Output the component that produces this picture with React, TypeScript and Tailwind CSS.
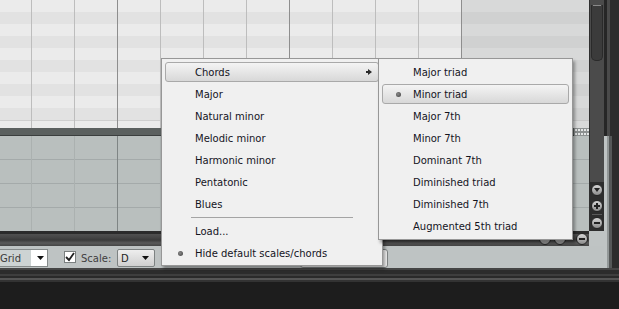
import React from "react";

const MENU_FONT = "font-['DejaVu_Sans',Verdana,sans-serif] text-[10px] text-[#14141e]";

const SCALES = ["Major", "Natural minor", "Melodic minor", "Harmonic minor", "Pentatonic", "Blues"];
const CHORDS = [
  "Major triad",
  "Minor triad",
  "Major 7th",
  "Minor 7th",
  "Dominant 7th",
  "Diminished triad",
  "Diminished 7th",
  "Augmented 5th triad",
];

// grid line x positions: 31, 74, 117 ... each 43px apart
const COLS = [0, 1, 2, 3, 4, 5, 6, 7, 8, 9];

function Bullet() {
  return <span className="block h-[5px] w-[5px] rounded-full bg-[radial-gradient(circle_at_40%_40%,#8a8a8a,#3c3c3c)]" />;
}

function SubArrow() {
  return (
    <svg width="6" height="6" viewBox="0 0 6 6" className="mr-[6px]">
      <path d="M0 2h2V0l4 3-4 3V4H0z" fill="#2a2a2a" />
    </svg>
  );
}

function MenuItem({
  label,
  active = false,
  bullet = false,
  arrow = false,
  indent,
}: {
  label: string;
  active?: boolean;
  bullet?: boolean;
  arrow?: boolean;
  indent: string;
}) {
  return (
    <div className="h-[22px] px-[3px] py-px">
      <div
        className={
          active
            ? "flex h-[20px] items-center rounded-[3px] border border-[#a9a9a9] bg-gradient-to-b from-[#f4f4f4] to-[#d8d8d8]"
            : "flex h-[20px] items-center rounded-[3px] border border-transparent"
        }
      >
        <span className={`flex shrink-0 items-center justify-center ${indent}`}>{bullet && <Bullet />}</span>
        <span className="flex-1 pt-px leading-none">{label}</span>
        {arrow && <SubArrow />}
      </div>
    </div>
  );
}

function RoundBtn({ glyph }: { glyph: "minus" | "plus" | "down" }) {
  return (
    <span className="flex h-[12px] w-[12px] items-center justify-center rounded-full border border-[#262626] bg-gradient-to-b from-[#d6d6d6] to-[#8c8c8c]">
      <svg width="8" height="8" viewBox="0 0 8 8">
        {glyph === "minus" && <rect x="1" y="3" width="6" height="2" fill="#222" />}
        {glyph === "plus" && <path d="M1 3h2V1h2v2h2v2H5v2H3V5H1z" fill="#222" />}
        {glyph === "down" && <path d="M1 2h6L4 6z" fill="#222" />}
      </svg>
    </span>
  );
}

function DropArrow() {
  return (
    <svg width="7" height="4" viewBox="0 0 7 4">
      <path d="M0 0h7L3.5 4z" fill="#111" />
    </svg>
  );
}

function TopGrid() {
  return (
    <div className="flex h-[128px] w-[589px] bg-[linear-gradient(to_bottom,transparent_120px,#cfcfcf_120px,#cfcfcf_121px,transparent_121px),repeating-linear-gradient(to_bottom,#ebebeb_0px,#ebebeb_12px,#e2e2e2_12px,#e2e2e2_24px)]">
      <div className="w-[31px] shrink-0" />
      {COLS.map((i) => (
        <div
          key={i}
          className={
            i === 2 || i === 6
              ? "w-[43px] shrink-0 border-l border-[#8e8e8e]"
              : "w-[43px] shrink-0 border-l border-[#bdbdbd]"
          }
        />
      ))}
      <div className="flex-1 border-l border-[#8e8e8e] bg-[linear-gradient(to_bottom,transparent_120px,#c6c6c6_120px,#c6c6c6_121px,transparent_121px),repeating-linear-gradient(to_bottom,#d8d9d9_0px,#d8d9d9_12px,#d0d1d1_12px,#d0d1d1_24px)]" />
    </div>
  );
}

function LowerGrid() {
  return (
    <div className="flex h-[95px] w-[589px] bg-[#b9bfbe] bg-[repeating-linear-gradient(to_bottom,transparent_0px,transparent_23px,#a4aaaa_23px,#a4aaaa_24px)]">
      <div className="w-[31px] shrink-0" />
      {COLS.map((i) => (
        <div
          key={i}
          className={
            i === 2 || i === 6
              ? "w-[43px] shrink-0 border-l border-[#7f8585]"
              : "w-[43px] shrink-0 border-l border-[#abb1b0]"
          }
        />
      ))}
      <div className="flex-1 border-l border-[#7f8585]" />
    </div>
  );
}

function DarkFrame() {
  return (
    <div className="flex w-[15px] shrink-0">
      <div className="w-[3px] bg-[#262626]" />
      <div className="w-[3px] bg-[#4a4a4a]" />
      <div className="flex-1 bg-[#2c2c2c]" />
    </div>
  );
}

function LightFrame() {
  return (
    <div className="flex w-[15px] shrink-0">
      <div className="w-[3px] bg-[#bfc4c4]" />
      <div className="w-[2px] bg-[#929797]" />
      <div className="w-[3px] bg-[#555858]" />
      <div className="flex-1 bg-[#2c2c2c]" />
    </div>
  );
}

function ResizeHandle() {
  return (
    <svg width="15" height="8" viewBox="0 0 15 8">
      <rect width="15" height="8" fill="#8d9191" />
      {[0, 1, 2, 3, 4].map((c) =>
        [0, 1].map((r) => <rect key={`${c}-${r}`} x={1 + c * 3} y={1 + r * 4} width="2" height="2" fill="#e4e6e6" />),
      )}
    </svg>
  );
}

export default function App() {
  return (
    <div className="relative h-[309px] w-[619px] overflow-hidden bg-[#1d1d1d]">
      {/* top pane */}
      <div className="flex">
        <TopGrid />
        <div className="w-[15px] shrink-0 border-l border-[#2f2f2f] bg-[#4b4b4b]">
          <div className="relative mx-auto h-[56px] w-[12px] rounded-b-[5px] border border-t-0 border-[#2a2a2a] bg-[#3b3b3b]">
            <div className="mx-auto mt-[5px] h-px w-[8px] bg-[#8a8a8a]" />
          </div>
        </div>
        <DarkFrame />
      </div>

      {/* divider */}
      <div className="flex h-[8px]">
        <div className="flex w-[589px] justify-end border-b border-[#3b3e3e] bg-[#5b605f]">
          <ResizeHandle />
        </div>
        <div className="w-[15px] shrink-0 border-l border-[#2f2f2f] bg-[#4b4b4b]" />
        <DarkFrame />
      </div>

      {/* lower pane */}
      <div className="flex">
        <LowerGrid />
        <div className="flex w-[15px] shrink-0 flex-col border-l border-[#2f2f2f]">
          <div className="h-[46px] bg-[#4b4b4b]" />
          <div className="flex flex-1 flex-col items-center bg-[#2e2e2e] pt-[2px]">
            <RoundBtn glyph="down" />
            <div className="mt-[4px]">
              <RoundBtn glyph="plus" />
            </div>
            <div className="my-[2px] h-px w-[10px] bg-[#5a5a5a]" />
            <RoundBtn glyph="minus" />
          </div>
        </div>
        <LightFrame />
      </div>

      {/* bottom bar */}
      <div className="flex h-[15px]">
        <div className="flex w-[589px] items-center justify-end gap-[3px] bg-[linear-gradient(to_bottom,#2b2b2b_0px,#2b2b2b_3px,#505050_3px,#474747_6px,#3a3a3a_9px,#5a5a5a_12px,#444_15px)] pr-[1px]">
          <RoundBtn glyph="minus" />
          <RoundBtn glyph="minus" />
          <div className="w-[4px]" />
          <RoundBtn glyph="minus" />
        </div>
        <div className="w-[15px] shrink-0 bg-[#bfc4c4]" />
        <LightFrame />
      </div>

      {/* toolbar */}
      <div className="flex h-[22px]">
        <div className="flex flex-1 items-start bg-[#bec3c3] font-['DejaVu_Sans',Verdana,sans-serif] text-[10px]">
          <div className="mt-[3px] flex h-[18px] w-[48px] items-center border border-l-0 border-[#868b8b] bg-white">
            <span className="flex h-full w-[31px] items-center bg-[#cdd3d3] text-[#3a3a3a]">Grid</span>
            <span className="ml-[6px]">
              <DropArrow />
            </span>
          </div>
          <div className="ml-[16px] mt-[5px] flex h-[12px] w-[12px] items-center justify-center border border-[#7a7f7f] bg-white">
            <svg width="10" height="10" viewBox="0 0 10 10">
              <path d="M1 5l3 3 5-7" stroke="#202020" strokeWidth="1.8" fill="none" />
            </svg>
          </div>
          <span className="ml-[5px] mt-[5px] w-[31px] text-[#3e3e3e]">Scale:</span>
          <div className="ml-[5px] mt-[3px] flex h-[18px] w-[38px] items-center rounded-[2px] border border-[#7d8282] bg-gradient-to-b from-[#eeeeee] to-[#cfcfcf] pl-[3px] pr-[5px] text-[#222]">
            <span className="flex-1">D</span>
            <DropArrow />
          </div>
          <div className="ml-[145px] mt-[3px] h-[19px] w-[88px] rounded-[3px] border border-[#7d8282] bg-[#f0f0f0]" />
        </div>
        <LightFrame />
      </div>

      {/* bottom chrome */}
      <div className="h-[14px] bg-[linear-gradient(to_bottom,#454545_0px,#454545_2px,#2c2c2c_2px,#2c2c2c_6px,#3e3e3e_6px,#3e3e3e_8px,#2a2a2a_8px,#2a2a2a_10px,#555_10px,#555_12px,#333_12px,#333_14px)]" />

      {/* scale menu */}
      <div
        className={`absolute left-[161px] top-[58px] w-[222px] border border-[#979797] bg-[#f0f0f0] pb-px pt-[2px] shadow-[2px_3px_3px_rgba(0,0,0,0.35)] ${MENU_FONT}`}
      >
        <MenuItem label="Chords" active arrow indent="w-[29px]" />
        {SCALES.map((s) => (
          <MenuItem key={s} label={s} indent="w-[29px]" />
        ))}
        <div className="flex h-[5px] items-center">
          <div className="ml-[29px] h-px w-[162px] bg-[#a4a4a4]" />
        </div>
        <MenuItem label="Load..." indent="w-[29px]" />
        <MenuItem label="Hide default scales/chords" bullet indent="w-[29px]" />
      </div>

      {/* chords submenu */}
      <div
        className={`absolute left-[378px] top-[58px] w-[195px] border border-[#979797] bg-[#f0f0f0] pb-[2px] pt-[2px] shadow-[2px_3px_3px_rgba(0,0,0,0.35)] ${MENU_FONT}`}
      >
        {CHORDS.map((c) => (
          <MenuItem key={c} label={c} active={c === "Minor triad"} bullet={c === "Minor triad"} indent="w-[30px]" />
        ))}
      </div>
    </div>
  );
}
